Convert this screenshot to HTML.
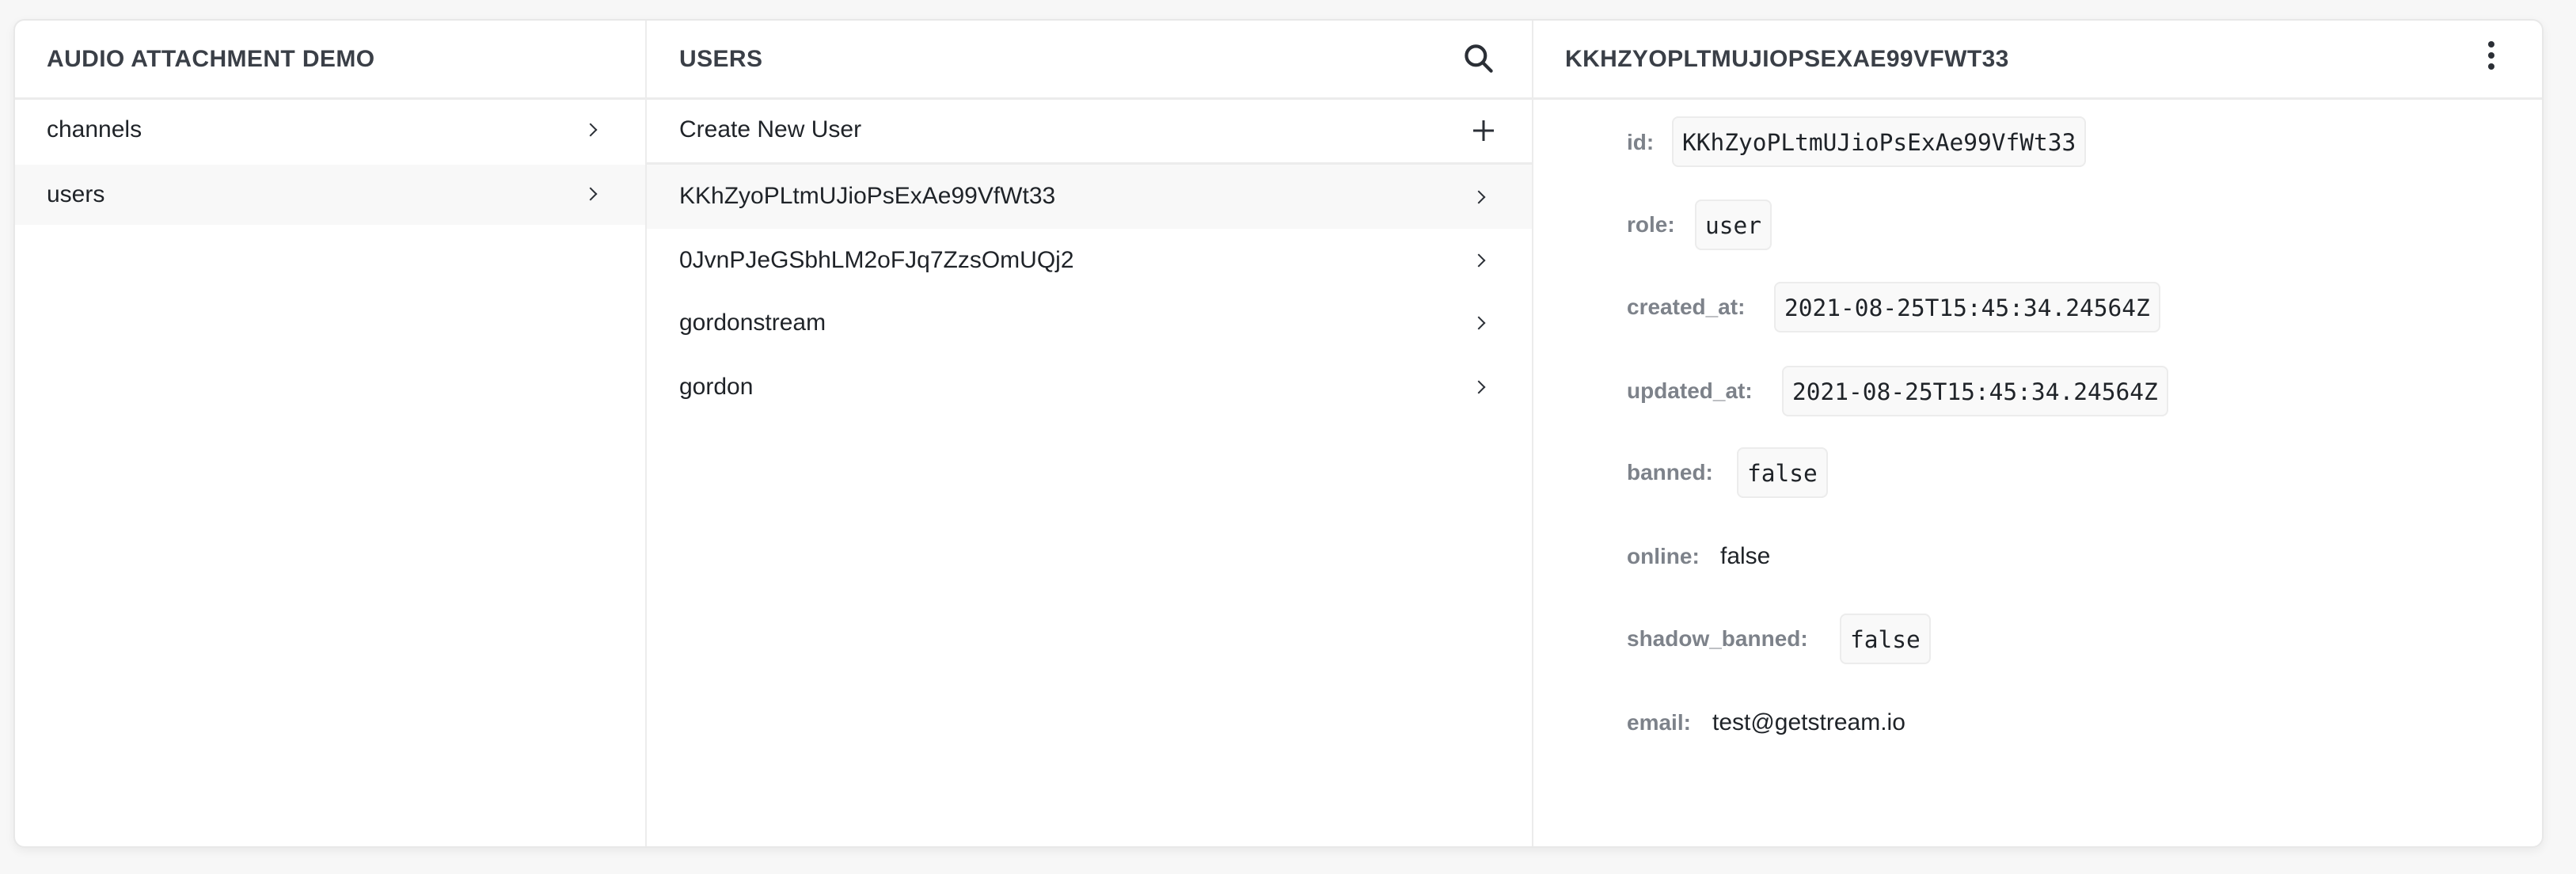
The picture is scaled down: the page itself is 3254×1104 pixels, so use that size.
<!DOCTYPE html>
<html><head><meta charset="utf-8"><style>
*{margin:0;padding:0;box-sizing:border-box}
body{width:3254px;height:1104px;background:#f7f7f7;font-family:"Liberation Sans",sans-serif;color:#1f2328;position:relative;overflow:hidden}
.panel{position:absolute;left:17px;top:24px;width:3196px;height:1047px;background:#fff;border:2px solid #e8e8e8;border-radius:14px;box-shadow:0 4px 12px rgba(0,0,0,.06);overflow:hidden}
.abs{position:absolute}
.vline{position:absolute;top:0;bottom:0;width:2px;background:#ececec}
.hline{position:absolute;height:3px;background:#ececec}
.h{position:absolute;top:0;height:98px;line-height:98px;font-weight:bold;font-size:30px;color:#3a3f47;letter-spacing:0.4px}
.row{position:absolute;height:80px;line-height:80px;font-size:30px;color:#1f2328}
.sel{background:#f8f8f8}
.chev{position:absolute;width:12px;height:12px;border-right:2.6px solid #2b2f36;border-top:2.6px solid #2b2f36;transform:rotate(45deg)}
.lab{position:absolute;font-size:28px;font-weight:bold;color:#7d828a;height:64px;line-height:64px}
.box{position:absolute;height:64px;line-height:62px;border:2px solid #ececec;border-radius:8px;background:#f9f9f9;font-family:"DejaVu Sans Mono","Liberation Mono",monospace;font-size:29.5px;padding:0 11px;color:#1f2328}
.val{position:absolute;font-size:30px;height:64px;line-height:64px}
</style></head><body>
<div class="panel">
  <div class="vline" style="left:796px"></div>
  <div class="vline" style="left:1916px"></div>
  <div class="hline" style="left:0;right:0;top:97px"></div>
  <div class="h" style="left:40px">AUDIO ATTACHMENT DEMO</div>
  <div class="h" style="left:839px">USERS</div>
  <div class="h" style="left:1958px">KKHZYOPLTMUJIOPSEXAE99VFWT33</div>
  <svg class="abs" style="left:1827px;top:26px" width="44" height="44" viewBox="0 0 24 24" fill="none" stroke="#2b2f36" stroke-width="2.3" stroke-linecap="round"><circle cx="10" cy="10" r="6.5"/><path d="M15 15l5.5 5.5"/></svg>
  <svg class="abs" style="left:3118px;top:24px" width="20" height="40" viewBox="0 0 10 20" fill="#2b2f36"><circle cx="5" cy="3" r="2"/><circle cx="5" cy="10" r="2"/><circle cx="5" cy="17" r="2"/></svg>

  <div class="row" style="left:0;width:796px;top:98px;padding-left:40px">channels</div>
  <div class="chev" style="left:721px;top:132px"></div>
  <div class="row sel" style="left:0;width:796px;top:182px;padding-left:40px;height:76px;line-height:76px">users</div>
  <div class="chev" style="left:721px;top:213px"></div>

  <div class="row" style="left:798px;width:1118px;top:98px;padding-left:41px">Create New User</div>
  <svg class="abs" style="left:1840px;top:124px" width="30" height="30" viewBox="0 0 30 30" stroke="#2b2f36" stroke-width="3"><path d="M15 2v26M2 15h26"/></svg>
  <div class="hline" style="left:798px;width:1118px;top:179px"></div>
  <div class="row sel" style="left:798px;width:1118px;top:182px;padding-left:41px;height:81px">KKhZyoPLtmUJioPsExAe99VfWt33</div>
  <div class="chev" style="left:1843px;top:217px"></div>
  <div class="row" style="left:798px;width:1118px;top:263px;padding-left:41px">0JvnPJeGSbhLM2oFJq7ZzsOmUQj2</div>
  <div class="chev" style="left:1843px;top:297px"></div>
  <div class="row" style="left:798px;width:1118px;top:342px;padding-left:41px">gordonstream</div>
  <div class="chev" style="left:1843px;top:376px"></div>
  <div class="row" style="left:798px;width:1118px;top:423px;padding-left:41px">gordon</div>
  <div class="chev" style="left:1843px;top:457px"></div>

  <div class="lab" style="left:2036px;top:122px">id:</div>
  <div class="box" style="left:2093px;top:121px">KKhZyoPLtmUJioPsExAe99VfWt33</div>
  <div class="lab" style="left:2036px;top:226px">role:</div>
  <div class="box" style="left:2122px;top:226px">user</div>
  <div class="lab" style="left:2036px;top:330px">created_at:</div>
  <div class="box" style="left:2222px;top:330px">2021-08-25T15:45:34.24564Z</div>
  <div class="lab" style="left:2036px;top:436px">updated_at:</div>
  <div class="box" style="left:2232px;top:436px">2021-08-25T15:45:34.24564Z</div>
  <div class="lab" style="left:2036px;top:539px">banned:</div>
  <div class="box" style="left:2175px;top:539px">false</div>
  <div class="lab" style="left:2036px;top:645px">online:</div>
  <div class="val" style="left:2154px;top:645px">false</div>
  <div class="lab" style="left:2036px;top:749px">shadow_banned:</div>
  <div class="box" style="left:2305px;top:749px">false</div>
  <div class="lab" style="left:2036px;top:855px">email:</div>
  <div class="val" style="left:2144px;top:855px">test@getstream.io</div>
</div>
</body></html>
